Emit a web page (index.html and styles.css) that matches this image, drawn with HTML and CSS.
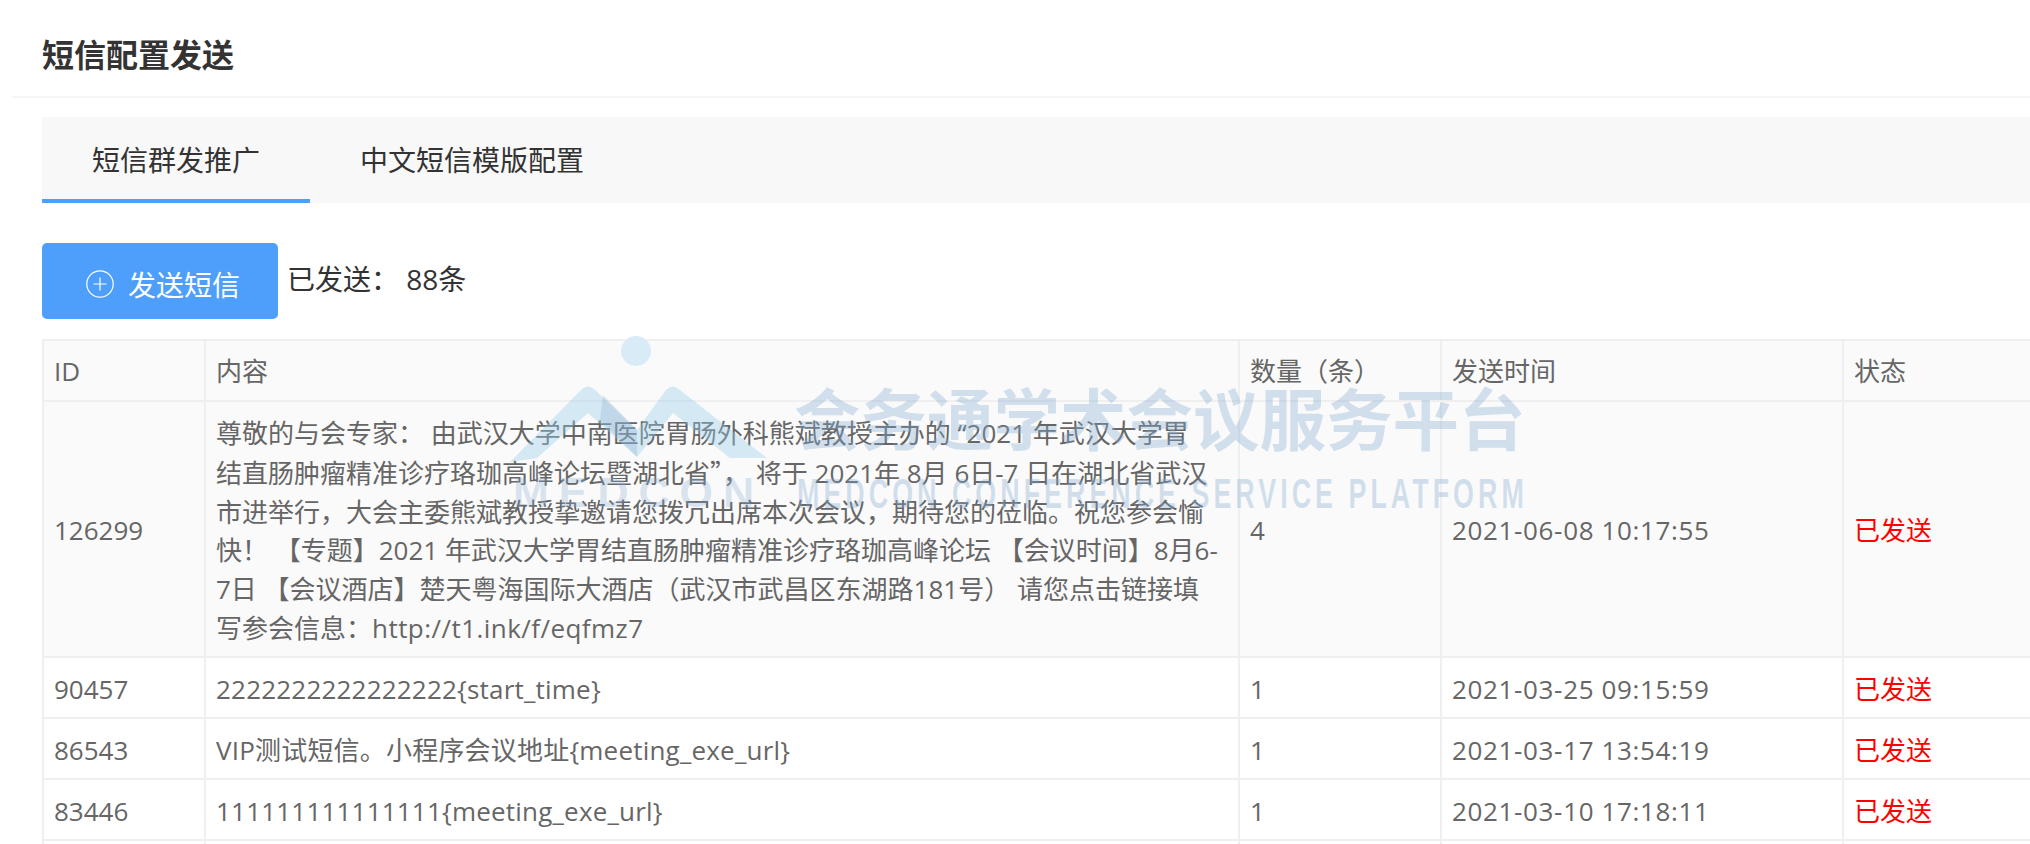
FILE: index.html
```html
<!DOCTYPE html>
<html lang="zh-CN">
  <head>
    <meta charset="UTF-8" />
    <title>短信配置发送</title>
    <link rel="stylesheet" href="styles.css">
  </head>
  <body>
    <!-- Page title -->
    <header class="page-head">
      <h1>短信配置发送</h1>
    </header>

    <main class="content">
      <!-- Tabs -->
      <div class="tabs">
        <a class="tab active">短信群发推广</a>
        <a class="tab">中文短信模版配置</a>
      </div>

      <!-- Toolbar -->
      <div class="toolbar">
        <button class="btn-send" type="button">
          <svg class="icon-plus" viewBox="0 0 28 28" width="28" height="28" fill="none" stroke="#fff" stroke-width="1.2">
            <circle cx="14" cy="14" r="13.2" />
            <path d="M14 7.5v13M7.5 14h13" />
          </svg>
          <span>发送短信</span>
        </button>
        <span class="sent-count">已发送：&nbsp;88条</span>
      </div>

      <!-- SMS table -->
      <table class="sms-table">
        <colgroup>
          <col class="col-id" />
          <col class="col-text" />
          <col class="col-num" />
          <col class="col-time" />
          <col class="col-status" />
        </colgroup>
        <thead>
          <tr>
            <th>ID</th>
            <th>内容</th>
            <th>数量（条）</th>
            <th>发送时间</th>
            <th>状态</th>
          </tr>
        </thead>
        <tbody>
          <tr class="hover">
            <td>126299</td>
            <td>尊敬的与会专家： 由武汉大学中南医院胃肠外科熊斌教授主办的 “2021 年武汉大学胃<br>结直肠肿瘤精准诊疗珞珈高峰论坛暨湖北省<span class="cjk">”</span>， 将于 2021年 8月 6日-7 日在湖北省武汉<br>市进举行，大会主委熊斌教授挚邀请您拨冗出席本次会议，期待您的莅临。祝您参会愉<br>快！ 【专题】2021 年武汉大学胃结直肠肿瘤精准诊疗珞珈高峰论坛 【会议时间】8月6-<br>7日 【会议酒店】楚天粤海国际大酒店（武汉市武昌区东湖路181号） 请您点击链接填<br>写参会信息：<span class="url">http://t1.ink/f/eqfmz7</span></td>
            <td>4</td>
            <td class="time">2021-06-08 10:17:55</td>
            <td class="status">已发送</td>
          </tr>
          <tr>
            <td>90457</td>
            <td class="plain">2222222222222222{start_time}</td>
            <td>1</td>
            <td class="time">2021-03-25 09:15:59</td>
            <td class="status">已发送</td>
          </tr>
          <tr>
            <td>86543</td>
            <td class="plain">VIP测试短信。小程序会议地址{meeting_exe_url}</td>
            <td>1</td>
            <td class="time">2021-03-17 13:54:19</td>
            <td class="status">已发送</td>
          </tr>
          <tr>
            <td>83446</td>
            <td class="plain">111111111111111{meeting_exe_url}</td>
            <td>1</td>
            <td class="time">2021-03-10 17:18:11</td>
            <td class="status">已发送</td>
          </tr>
          <tr>
            <td>&nbsp;</td>
            <td></td>
            <td></td>
            <td></td>
            <td></td>
          </tr>
        </tbody>
      </table>
    </main>

    <!-- Watermark over the page -->
    <div class="watermark">
      <div class="wm-logo">
        <svg viewBox="0 0 270 130" width="270" height="130">
          <circle cx="131" cy="15" r="15" fill="#d8ebf6" />
          <path d="M5 126 L76 54 Q83 47 90 54 L132 94 L161 54 Q168 47 175 54 L262 122 L225 122 L168 77 L132 121 L83 77 L32 122 Z" fill="rgba(150, 205, 235, 0.38)" />
          <path d="M98 59 L132 94 L132 121 L95 84 Z" fill="rgba(120, 150, 190, 0.22)" />
        </svg>
        <span class="wm-brand">MEDCON</span>
      </div>
      <div class="wm-text">
        <div class="wm-cn">会务通学术会议服务平台</div>
        <div class="wm-en">MEDCON CONFERENCE SERVICE PLATFORM</div>
      </div>
    </div>
  </body>
</html>
```

FILE: styles.css
```css
* {
  margin: 0;
  padding: 0;
  box-sizing: border-box;
}

html,
body {
  height: 100%;
  overflow: hidden;
}

body {
  position: relative;
  background-color: #fff;
  color: #333;
  font-family: "Open Sans", "Noto Sans CJK SC", sans-serif;
}

.page-head {
  height: 98px;
  margin-left: 12px;
  padding: 14px 0 0 30px;
  display: flex;
  align-items: center;
  border-bottom: 2px solid #f5f5f5;
}

.page-head h1 {
  font-size: 32px;
  font-weight: bold;
  line-height: 40px;
  color: #333;
}

.content {
  padding: 19px 0 0 42px;
}

.tabs {
  display: flex;
  height: 86px;
  background-color: #f8f8f8;
}

.tab {
  display: block;
  padding: 0 50px;
  font-size: 28px;
  line-height: 86px;
  color: #333;
}

.tab.active {
  border-bottom: 4px solid #4e9ffc;
}

.toolbar {
  display: flex;
  align-items: center;
  gap: 9px;
  margin-top: 40px;
}

.btn-send {
  width: 236px;
  height: 76px;
  padding: 5px 0 0 44px;
  display: flex;
  align-items: center;
  gap: 14px;
  border: none;
  border-radius: 5px;
  background-color: #4e9ffc;
  color: #fff;
  font-family: inherit;
  font-size: 28px;
}

.icon-plus {
  flex: none;
}

.sent-count {
  padding-bottom: 4px;
  font-size: 28px;
  line-height: 40px;
  color: #333;
}

.sms-table {
  width: 2000px;
  margin-top: 20px;
  border-collapse: collapse;
  table-layout: fixed;
  font-size: 26px;
  color: #666;
}

.col-id { width: 162px; }
.col-text { width: 1034px; }
.col-num { width: 202px; }
.col-time { width: 402px; }
.col-status { width: 200px; }

.sms-table th,
.sms-table td {
  height: 61px;
  border: 2px solid #efefef;
  line-height: 38.8px;
  font-weight: normal;
  text-align: left;
}

.sms-table th {
  padding: 11px 10px 9px;
  background-color: #fafafa;
}

.sms-table td {
  padding: 12px 10px 8px;
}

.sms-table .hover td {
  background-color: #fafafa;
}

.sms-table td.plain {
  letter-spacing: 0.2px;
}

.sms-table td.time {
  letter-spacing: 0.65px;
}

.sms-table td.status {
  color: #f00;
}

.cjk {
  font-family: "Noto Sans CJK SC", sans-serif;
}

.url {
  letter-spacing: 0.45px;
}

.watermark {
  position: absolute;
  left: 505px;
  top: 336px;
  display: flex;
  gap: 27px;
  pointer-events: none;
}

.wm-logo {
  position: relative;
  width: 262px;
  height: 172px;
}

.wm-logo svg {
  display: block;
}

.wm-brand {
  position: absolute;
  left: 8px;
  top: 134px;
  font-family: "Liberation Sans", sans-serif;
  font-size: 43px;
  font-weight: bold;
  line-height: 44px;
  letter-spacing: 10px;
  color: rgba(130, 170, 210, 0.3);
}

.wm-text {
  padding-top: 45px;
}

.wm-cn {
  font-size: 66.5px;
  font-weight: bold;
  line-height: 76px;
  white-space: nowrap;
  color: rgba(130, 170, 210, 0.34);
}

.wm-en {
  margin-top: 14px;
  margin-left: 3px;
  font-family: "Liberation Sans", sans-serif;
  font-size: 43px;
  font-weight: bold;
  line-height: 44px;
  letter-spacing: 6.4px;
  white-space: nowrap;
  transform: scaleX(0.625);
  transform-origin: left center;
  color: rgba(130, 170, 210, 0.34);
}
```
